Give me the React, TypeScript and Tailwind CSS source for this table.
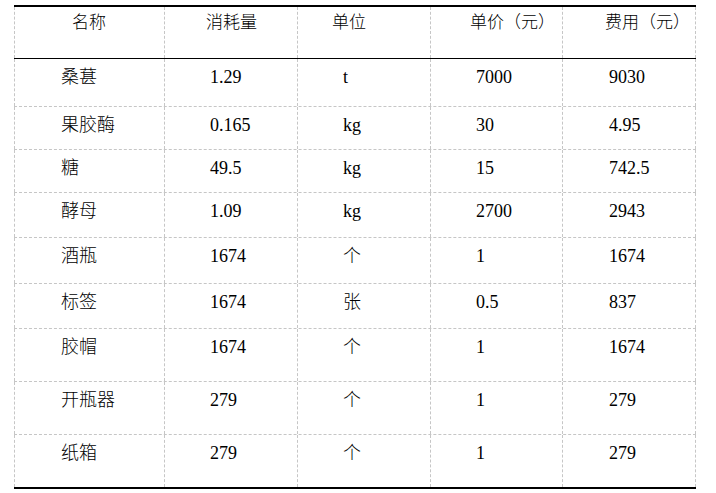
import React from "react";

const header = ["名称", "消耗量", "单位", "单价（元）", "费用（元）"];
const rows: string[][] = [
  ["桑葚", "1.29", "t", "7000", "9030"],
  ["果胶酶", "0.165", "kg", "30", "4.95"],
  ["糖", "49.5", "kg", "15", "742.5"],
  ["酵母", "1.09", "kg", "2700", "2943"],
  ["酒瓶", "1674", "个", "1", "1674"],
  ["标签", "1674", "张", "0.5", "837"],
  ["胶帽", "1674", "个", "1", "1674"],
  ["开瓶器", "279", "个", "1", "279"],
  ["纸箱", "279", "个", "1", "279"],
];
const rowH = [
  "h-[48px]",
  "h-[43px]",
  "h-[43px]",
  "h-[45px]",
  "h-[46px]",
  "h-[45px]",
  "h-[53px]",
  "h-[53px]",
  "h-[52px]",
];
const colW = ["w-[150px]", "w-[133px]", "w-[133px]", "w-[132px]", "w-[134px] border-r"];
const headPl = ["pl-[57px]", "pl-[41px]", "pl-[34px]", "pl-[39px]", "pl-[42px]"];
const bodyPl = ["pl-[46px]", "pl-[45px]", "pl-[45px]", "pl-[45px]", "pl-[46px]"];

export default function App() {
  return (
    <div className="w-[716px] h-[493px] bg-white pt-[5px] pl-[14px]">
      <div className="w-[682px] border-t-2 border-b-2 border-black">
        <div className="flex h-[52px] border-b border-solid border-black">
          {header.map((h, i) => (
            <div
              key={i}
              className={`${colW[i]} ${headPl[i]} shrink-0 border-l border-dashed border-[#c6c6c6] pt-[3px] text-[17px] leading-[22px] font-light text-black font-['Noto_Sans_CJK_SC',sans-serif] whitespace-nowrap`}
            >
              {h}
            </div>
          ))}
        </div>
        {rows.map((r, ri) => (
          <div
            key={ri}
            className={`flex ${rowH[ri]} ${ri < rows.length - 1 ? "border-b border-dashed border-[#c6c6c6]" : ""}`}
          >
            {r.map((c, ci) => (
              <div
                key={ci}
                className={`${colW[ci]} ${bodyPl[ci]} shrink-0 border-l border-dashed border-[#c6c6c6] pt-[6px] text-[18px] leading-[24px] font-light text-black font-['Liberation_Serif','Noto_Sans_CJK_SC',serif] whitespace-nowrap`}
              >
                {c}
              </div>
            ))}
          </div>
        ))}
      </div>
    </div>
  );
}
